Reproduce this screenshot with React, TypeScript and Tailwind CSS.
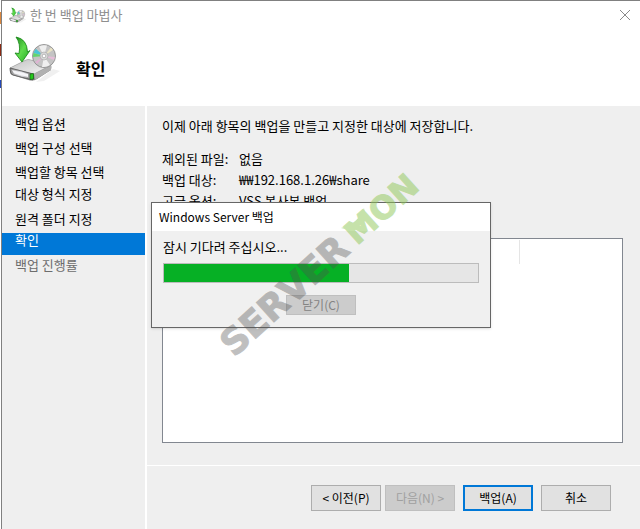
import React, { useState } from 'react';

const steps = [
  { label: '백업 옵션', row: 'h-6 items-center' },
  { label: '백업 구성 선택', row: 'h-6 items-center' },
  { label: '백업할 항목 선택', row: 'h-6 items-center' },
  { label: '대상 형식 지정', row: 'h-5 items-center' },
  { label: '원격 폴더 지정', row: 'h-[29px] items-center' },
  { label: '확인', row: 'h-[22px] items-start leading-[14px] bg-[#0078d7] text-white', current: true },
  { label: '백업 진행률', row: 'h-5 items-center text-[#6d6d6d]' },
];

const details = [
  { name: '제외된 파일:', value: '없음' },
  { name: '백업 대상:', value: '₩₩192.168.1.26₩share' },
  { name: '고급 옵션:', value: 'VSS 복사본 백업' },
];

const buttonBase = 'h-[26px] w-[70px] border text-[12px] leading-4 whitespace-nowrap';

function BackupIcon({ className }: { className: string }) {
  return (
    <svg viewBox="0 0 54 50" className={className} aria-hidden="true">
      <defs>
        <linearGradient id="arrowFill" x1="0" y1="0" x2="1" y2="1">
          <stop offset="0" stopColor="#1d8a1d" />
          <stop offset="0.5" stopColor="#5fdc4c" />
          <stop offset="1" stopColor="#22a822" />
        </linearGradient>
        <linearGradient id="driveTop" x1="0" y1="0" x2="1" y2="1">
          <stop offset="0" stopColor="#c2c2c2" />
          <stop offset="1" stopColor="#f6f6f6" />
        </linearGradient>
        <linearGradient id="driveFront" x1="0" y1="0" x2="1" y2="0">
          <stop offset="0" stopColor="#8c8c8c" />
          <stop offset="0.5" stopColor="#e0e0e4" />
          <stop offset="1" stopColor="#777" />
        </linearGradient>
      </defs>
      <path d="M28 47L45 34L52 36L36 46Z" fill="#f0f0f0" />
      <path d="M2 33L18 25Q20 24 23 25L43 30Q44 32 43 35L29 44Q26 46 22 45.500L4 40Q2 39 2 36Z" fill="#858585" />
      <path d="M2 33L18 25Q20 24 23 25L43 30L26 39Z" fill="url(#driveTop)" stroke="#a5a5a5" strokeWidth="0.6" />
      <path d="M2 33L25 39V45L5 40Q2 39 2 33Z" fill="url(#driveFront)" stroke="#555" strokeWidth="0.8" />
      <path d="M4 35L20 39V42L6 38.500Z" fill="#f5f5f8" />
      <path d="M26 39L43 30.500V35L27 45Z" fill="#b0b0b0" />
      <path d="M22 39L25.500 38.500V44L22 44.500Z" fill="#26c81c" stroke="#0b5b0b" strokeWidth="0.6" />
      <circle cx="36" cy="21" r="11.500" fill="#c4c4c4" stroke="#858585" strokeWidth="0.8" />
      <path d="M36 21L31 11.500A11 11 0 0 1 39 10.500Z" fill="#efefef" />
      <path d="M36 21L25.500 18A11 11 0 0 1 28 14Z" fill="#48c6d6" />
      <path d="M36 21L25 22A11 11 0 0 1 25.500 18Z" fill="#63d46e" />
      <path d="M36 21L43 12.500A11 11 0 0 1 45 15Z" fill="#e9e3c4" />
      <path d="M36 21L46.800 22A11 11 0 0 1 46 25Z" fill="#e6bdd9" />
      <path d="M36 21L42 30A11 11 0 0 1 34 32Z" fill="#efefef" />
      <path d="M36 21L29 29A11 11 0 0 1 27 27Z" fill="#dfb4d3" />
      <circle cx="36" cy="21" r="4" fill="#d9d9d9" stroke="#a5a5a5" strokeWidth="0.6" />
      <circle cx="36" cy="21" r="1.800" fill="#fff" stroke="#888" strokeWidth="0.5" />
      <path
        d="M8 2Q19 4 19.500 17L22 15.500L14 27L7 18L11 18.500Q13 9 8 2Z"
        fill="url(#arrowFill)"
        stroke="#148514"
        strokeWidth="0.8"
        strokeLinejoin="round"
      />
    </svg>
  );
}

function Watermark() {
  return (
    <svg
      width="240"
      height="220"
      viewBox="205 155 240 220"
      className="pointer-events-none absolute top-[155px] left-[205px] font-['DejaVu_Sans',sans-serif] font-bold"
    >
      <text
        transform="translate(234 358) rotate(-42)"
        fontSize="36"
        fill="#505050"
        stroke="#505050"
        opacity="0.36"
      >
        SERVER
      </text>
      <g opacity="0.5" fill="#8ec758" stroke="#8ec758">
        <text transform="translate(357 246) rotate(-42)" fontSize="32">
          MON
        </text>
        {/* leaf across the top of the M */}
        <path d="M341 228Q358 224 364 208L366 220L354 231Z" stroke="none" />
      </g>
    </svg>
  );
}

function ProgressDialog({ onClose }: { onClose: () => void }) {
  const progress = 59;

  return (
    <div className="absolute inset-y-0 right-0 left-0.5 flex items-center justify-center">
      <div
        role="dialog"
        aria-labelledby="dialogTitle"
        className="w-[340px] border border-[#666] bg-[#f0f0f0] shadow-sm"
      >
        <h2 id="dialogTitle" className="h-7 bg-white px-[7px] text-[12px] leading-7 font-normal">
          Windows Server 백업
        </h2>
        <div className="flex flex-col px-[11px] pt-1.5 pb-3">
          <p className="text-[13px] leading-5">잠시 기다려 주십시오...</p>
          <div
            role="progressbar"
            aria-valuenow={progress}
            className="mt-1.5 h-5 border border-[#bcbcbc] bg-[#e6e6e6]"
          >
            <div className="h-full bg-[#06b025]" style={{ width: `${progress}%` }} />
          </div>
          <button
            type="button"
            disabled
            onClick={onClose}
            className="mt-3 h-5 w-[70px] self-center border border-[#bfbfbf] bg-[#ccc] text-[12px] leading-4 text-[#838383]"
          >
            닫기(C)
          </button>
        </div>
      </div>
    </div>
  );
}

export default function App() {
  const [open, setOpen] = useState(true);

  return (
    <div className="relative flex min-h-screen bg-white font-['Noto_Sans_CJK_KR','Noto_Sans',sans-serif] text-[13px] leading-4 text-black">
      {/* sliver of the window behind */}
      <div className="flex w-px shrink-0 flex-col pt-3">
        <span className="h-3 bg-[#d9863e]" />
        <span className="mt-5 h-3 bg-[#8a2a14]" />
        <span className="mt-6 h-2 bg-[#2448b8]" />
      </div>

      <div className="flex min-w-0 flex-1 flex-col border-t border-l border-[#808080]">
        <header className="flex h-[105px] flex-col">
          <div className="flex h-7 items-center pr-2 pl-[7px]">
            <BackupIcon className="h-[17px] w-[18px]" />
            <span className="ml-[3px] text-[#8f8f8f]">한 번 백업 마법사</span>
            <button type="button" aria-label="닫기" className="ml-auto p-px text-[#8a8a8a]">
              <svg width="12" height="12" viewBox="0 0 12 12" stroke="currentColor">
                <path d="M1 1L11 11M11 1L1 11" />
              </svg>
            </button>
          </div>
          <div className="flex items-center pt-1.5 pl-1.5">
            <BackupIcon className="h-[50px] w-[54px]" />
            <h1 className="ml-3.5 pt-4 text-[16px] leading-6 font-bold">확인</h1>
          </div>
        </header>

        <div className="flex flex-1">
          <nav className="w-[143px] shrink-0 bg-[#efefef] pt-1.5">
            <ol>
              {steps.map((step) => (
                <li
                  key={step.label}
                  aria-current={step.current ? 'step' : undefined}
                  className={`flex pl-[13px] ${step.row}`}
                >
                  {step.label}
                </li>
              ))}
            </ol>
          </nav>

          <main className="ml-0.5 flex min-w-0 flex-1 flex-col bg-[#efefef]">
            <div className="flex flex-1 flex-col pt-3 pr-[17px] pb-[22px] pl-[15px]">
              <p>이제 아래 항목의 백업을 만들고 지정한 대상에 저장합니다.</p>
              <dl className="mt-[14px] grid grid-cols-[77px_1fr]">
                {details.map((d) => (
                  <React.Fragment key={d.name}>
                    <dt className="h-[21px] leading-[21px]">{d.name}</dt>
                    <dd className="h-[21px] leading-[21px]">{d.value}</dd>
                  </React.Fragment>
                ))}
              </dl>
              <div className="mt-[27px] flex-1 border border-[#828790] bg-white">
                <div className="mt-px h-6 w-[357px] border-r border-[#e5e5e5]" />
              </div>
            </div>

            <footer className="flex h-16 items-start justify-end border-t border-white pt-[19px] pr-[29px]">
              <button type="button" className={`${buttonBase} border-[#adadad] bg-[#e1e1e1]`}>
                &lt; 이전(P)
              </button>
              <button
                type="button"
                disabled
                className={`${buttonBase} ml-1 border-[#bfbfbf] bg-[#ccc] text-[#a0a0a0]`}
              >
                다음(N) &gt;
              </button>
              <button
                type="button"
                onClick={() => setOpen(true)}
                className={`${buttonBase} ml-2 border-2 border-[#0078d7] bg-[#e1e1e1]`}
              >
                백업(A)
              </button>
              <button type="button" className={`${buttonBase} ml-2 border-[#adadad] bg-[#e1e1e1]`}>
                취소
              </button>
            </footer>
          </main>
        </div>
      </div>

      {open && <ProgressDialog onClose={() => setOpen(false)} />}
      <Watermark />
    </div>
  );
}
